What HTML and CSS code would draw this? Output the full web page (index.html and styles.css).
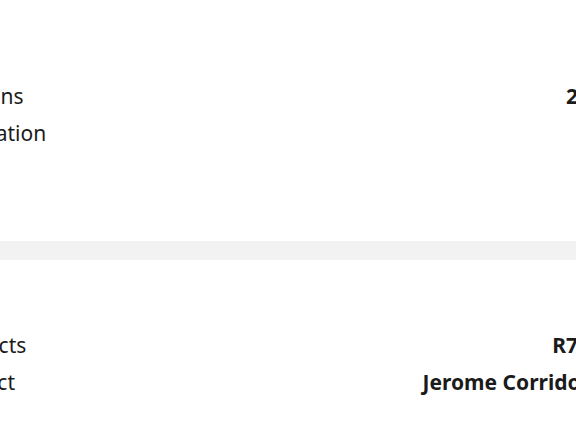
FILE: index.html
```html
<!DOCTYPE html>
<html lang="en">
<head>
<meta charset="utf-8">
<title>Details</title>
<link rel="stylesheet" href="styles.css">
</head>
<body>
<div class="page">
  <section class="card card-top">
    <div class="row"><span class="label">Sessions</span><span class="value">24</span></div>
    <div class="row"><span class="label">Navigation</span><span class="value"></span></div>
  </section>
  <div class="divider"></div>
  <section class="card card-bottom">
    <div class="row"><span class="label">Products</span><span class="value">R75</span></div>
    <div class="row"><span class="label">Contact</span><span class="value">Jerome Corridor</span></div>
  </section>
</div>
</body>
</html>
```

FILE: styles.css
```css
html, body {
  margin: 0;
  padding: 0;
  background: #ffffff;
  overflow: hidden;
}

body {
  width: 576px;
  height: 432px;
  font-family: "Noto Sans", "Open Sans", sans-serif;
  font-size: 21px;
  color: #1b1b1b;
}

.page {
  margin-left: -61px;
  width: 651px;
  display: flex;
  flex-direction: column;
}

.card {
  display: flex;
  flex-direction: column;
  background: #ffffff;
}

.card-top {
  padding: 78px 0 89px;
}

.card-bottom {
  padding: 67px 0 0;
}

.row {
  display: flex;
  justify-content: space-between;
  align-items: baseline;
  height: 37px;
  line-height: 37px;
  white-space: nowrap;
}

.label {
  font-weight: 400;
}

.value {
  font-weight: 700;
}

.divider {
  height: 19px;
  background: #f2f2f2;
}
```
